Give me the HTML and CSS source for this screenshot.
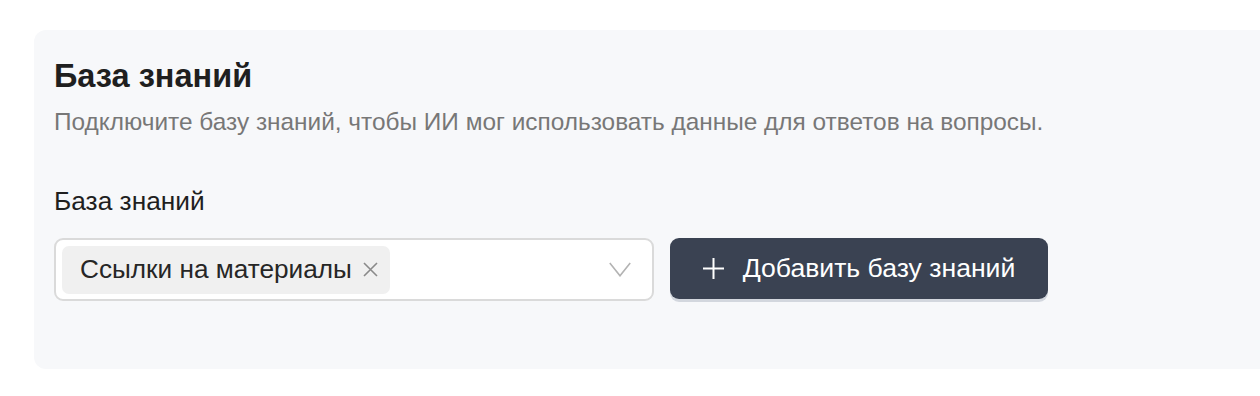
FILE: index.html
```html
<!DOCTYPE html>
<html lang="ru">
<head>
<meta charset="utf-8">
<link rel="stylesheet" href="styles.css">
</head>
<body>
<div class="page">
  <section class="card">
    <h2 class="title">База знаний</h2>
    <p class="desc">Подключите базу знаний, чтобы ИИ мог использовать данные для ответов на вопросы.</p>
    <div class="field">
      <label class="label">База знаний</label>
      <div class="row">
        <div class="select">
          <div class="tags">
            <span class="tag">Ссылки на материалы<svg class="tag-x" width="15" height="15" viewBox="0 0 15 15"><path d="M1 1L14 14M14 1L1 14" stroke="#8a8a8a" stroke-width="1.6" fill="none"/></svg></span>
          </div>
          <svg class="chev" width="22" height="15" viewBox="0 0 22 15"><path d="M0.8 1L11 13.8L21.2 1" stroke="#b3b3b3" stroke-width="1.6" fill="none"/></svg>
        </div>
        <button class="btn">
          <svg class="plus" width="21" height="21" viewBox="0 0 21 21"><path d="M10.5 0V21M0 10.5H21" stroke="#fff" stroke-width="2" fill="none"/></svg>
          <span>Добавить базу знаний</span>
        </button>
      </div>
    </div>
  </section>
</div>
</body>
</html>
```

FILE: styles.css
```css
* { box-sizing: border-box; }
html, body { margin: 0; padding: 0; background: #ffffff; }
body { font-family: "Liberation Sans", Arial, sans-serif; color: #1f1f1f; }
.page { padding: 30px 0 0 34px; }
.card {
  background: #f7f8fa;
  border-radius: 12px 0 0 12px;
  padding: 27px 20px 0 20px;
  height: 339px;
}
.title {
  margin: 0;
  font-size: 32.5px;
  font-weight: 700;
  line-height: 38px;
  color: #1f1f1f;
}
.desc {
  margin: 12px 0 0 0;
  font-size: 24.4px;
  line-height: 30px;
  color: #777777;
  white-space: nowrap;
}
.field { margin-top: 49px; }
.label {
  display: block;
  font-size: 26.3px;
  line-height: 30px;
  color: #1f1f1f;
}
.row {
  display: flex;
  gap: 16px;
  margin-top: 22px;
}
.select {
  width: 600px;
  height: 63px;
  background: #fff;
  border: 2px solid #dadada;
  border-radius: 9px;
  display: flex;
  align-items: center;
  justify-content: space-between;
  padding: 0 21px 0 6px;
}
.tags { display: flex; }
.tag {
  display: inline-flex;
  align-items: center;
  gap: 11px;
  height: 48px;
  padding: 0 12px 0 18px;
  background: #f0f0f0;
  border-radius: 7px;
  font-size: 26.2px;
  color: #262626;
  white-space: nowrap;
}
.tag-x { display: block; }
.chev { display: block; }
.btn {
  height: 61px;
  width: 378px;
  background: #3a4252;
  border: none;
  border-radius: 9px;
  box-shadow: 0 3px 0 #d3d7de;
  color: #fff;
  font-family: "Liberation Sans", Arial, sans-serif;
  font-size: 26.6px;
  display: flex;
  align-items: center;
  justify-content: center;
  gap: 19px;
  padding: 0;
  white-space: nowrap;
}
.plus { display: block; }
```
